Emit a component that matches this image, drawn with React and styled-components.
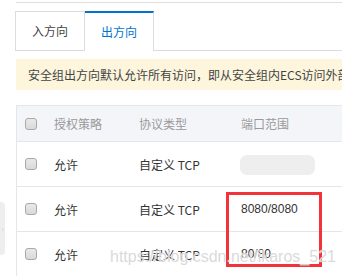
import React from "react";
import styled, { createGlobalStyle } from "styled-components";

const GlobalStyle = createGlobalStyle`
  html, body {
    margin: 0;
    padding: 0;
    background: #ffffff;
    overflow: hidden;
  }
  body {
    font-family: "Noto Sans CJK SC", "Liberation Sans", sans-serif;
    font-size: 12px;
    color: #333;
  }
`;

const Page = styled.div`
  position: relative;
  width: 342px;
  height: 276px;
  padding: 2px 0 0 16px;
  box-sizing: border-box;
  overflow: hidden;
`;

const TopLine = styled.div`
  height: 1px;
  background: #dedede;
`;

const TabBar = styled.div`
  display: flex;
  margin: 8px 0 0 -1px;
  border-bottom: 1px solid #dcdcdc;
`;

const Tab = styled.div`
  position: relative;
  box-sizing: border-box;
  width: ${(p) => (p.$active ? "69px" : "70px")};
  height: ${(p) => (p.$active ? "40px" : "39px")};
  margin-bottom: ${(p) => (p.$active ? "-1px" : "0")};
  display: flex;
  align-items: center;
  justify-content: center;
  background: #fff;
  color: ${(p) => (p.$active ? "#0073cf" : "#444")};
  border: 1px solid #dcdcdc;
  border-left: ${(p) => (p.$active ? "none" : "1px solid #dcdcdc")};
  border-bottom: none;
  border-top: ${(p) => (p.$active ? "2px solid #0073cf" : "1px solid #dcdcdc")};
  padding-bottom: 2px;
`;

const Notice = styled.div`
  margin-top: 8px;
  height: 31px;
  display: flex;
  align-items: center;
  padding-left: 12px;
  background: #fdf5dc;
  color: #444;
  white-space: nowrap;
  overflow: hidden;
`;

const Table = styled.div`
  margin-top: 15px;
  border-left: 1px solid #e3e6eb;
  border-top: 1px solid #e3e6eb;
`;

const Row = styled.div`
  display: grid;
  grid-template-columns: 37px 85px 102px 1fr;
  align-items: center;
  height: ${(p) => (p.$head ? "35px" : "44px")};
  background: ${(p) => (p.$head ? "#f4f5f9" : "#fff")};
  color: ${(p) => (p.$head ? "#999" : "#333")};
  border-bottom: 1px solid #e3e6eb;
`;

const Cell = styled.div`
  white-space: nowrap;
`;

const PortCell = styled(Cell)`
  font-family: "Liberation Sans", "Noto Sans CJK SC", sans-serif;
`;

const CheckCell = styled.div`
  padding-left: 8px;
  display: flex;
  align-items: center;
`;

const Checkbox = styled.span`
  display: block;
  width: 12px;
  height: 12px;
  box-sizing: border-box;
  border: 1px solid #a9a9a9;
  border-radius: 3px;
  background: linear-gradient(#e9e9e9, #d9d9d9);
`;

const Blurred = styled.span`
  display: block;
  width: 75px;
  height: 20px;
  margin-left: -1px;
  margin-top: 1px;
  border-radius: 7px;
  background: #eeeeee;
`;

const Highlight = styled.div`
  position: absolute;
  left: 226px;
  top: 192px;
  width: 96px;
  height: 75px;
  box-sizing: border-box;
  border: 3px solid #f2333a;
  pointer-events: none;
`;

const SideHandle = styled.div`
  position: absolute;
  left: -4px;
  top: 202px;
  width: 9px;
  height: 53px;
  border-radius: 4px;
  background: #eeeeee;
  display: flex;
  align-items: center;
  justify-content: flex-end;
  color: #cfcfcf;
  font-size: 8px;
  padding-right: 1px;
  box-sizing: border-box;
`;

const Watermark = styled.div`
  position: absolute;
  left: 110px;
  top: 248px;
  font-family: "Liberation Sans", sans-serif;
  font-size: 16px;
  color: rgba(205, 205, 205, 0.75);
  text-shadow: 0 0 1px #fff;
  white-space: nowrap;
  pointer-events: none;
`;

const rows = [
  { policy: "允许", proto: "自定义 TCP", port: null },
  { policy: "允许", proto: "自定义 TCP", port: "8080/8080" },
  { policy: "允许", proto: "自定义 TCP", port: "80/80" },
];

export default function App() {
  return (
    <>
      <GlobalStyle />
      <Page>
        <TopLine />
        <TabBar>
          <Tab>入方向</Tab>
          <Tab $active>出方向</Tab>
        </TabBar>
        <Notice>安全组出方向默认允许所有访问，即从安全组内ECS访问外部都是放行的</Notice>
        <Table>
          <Row $head>
            <CheckCell>
              <Checkbox />
            </CheckCell>
            <Cell>授权策略</Cell>
            <Cell>协议类型</Cell>
            <Cell>端口范围</Cell>
          </Row>
          {rows.map((r, i) => (
            <Row key={i}>
              <CheckCell>
                <Checkbox />
              </CheckCell>
              <Cell>{r.policy}</Cell>
              <Cell>{r.proto}</Cell>
              <PortCell>{r.port ? r.port : <Blurred />}</PortCell>
            </Row>
          ))}
        </Table>
        <SideHandle>›</SideHandle>
        <Highlight />
        <Watermark>https://blog.csdn.net/ikaros_521</Watermark>
      </Page>
    </>
  );
}
